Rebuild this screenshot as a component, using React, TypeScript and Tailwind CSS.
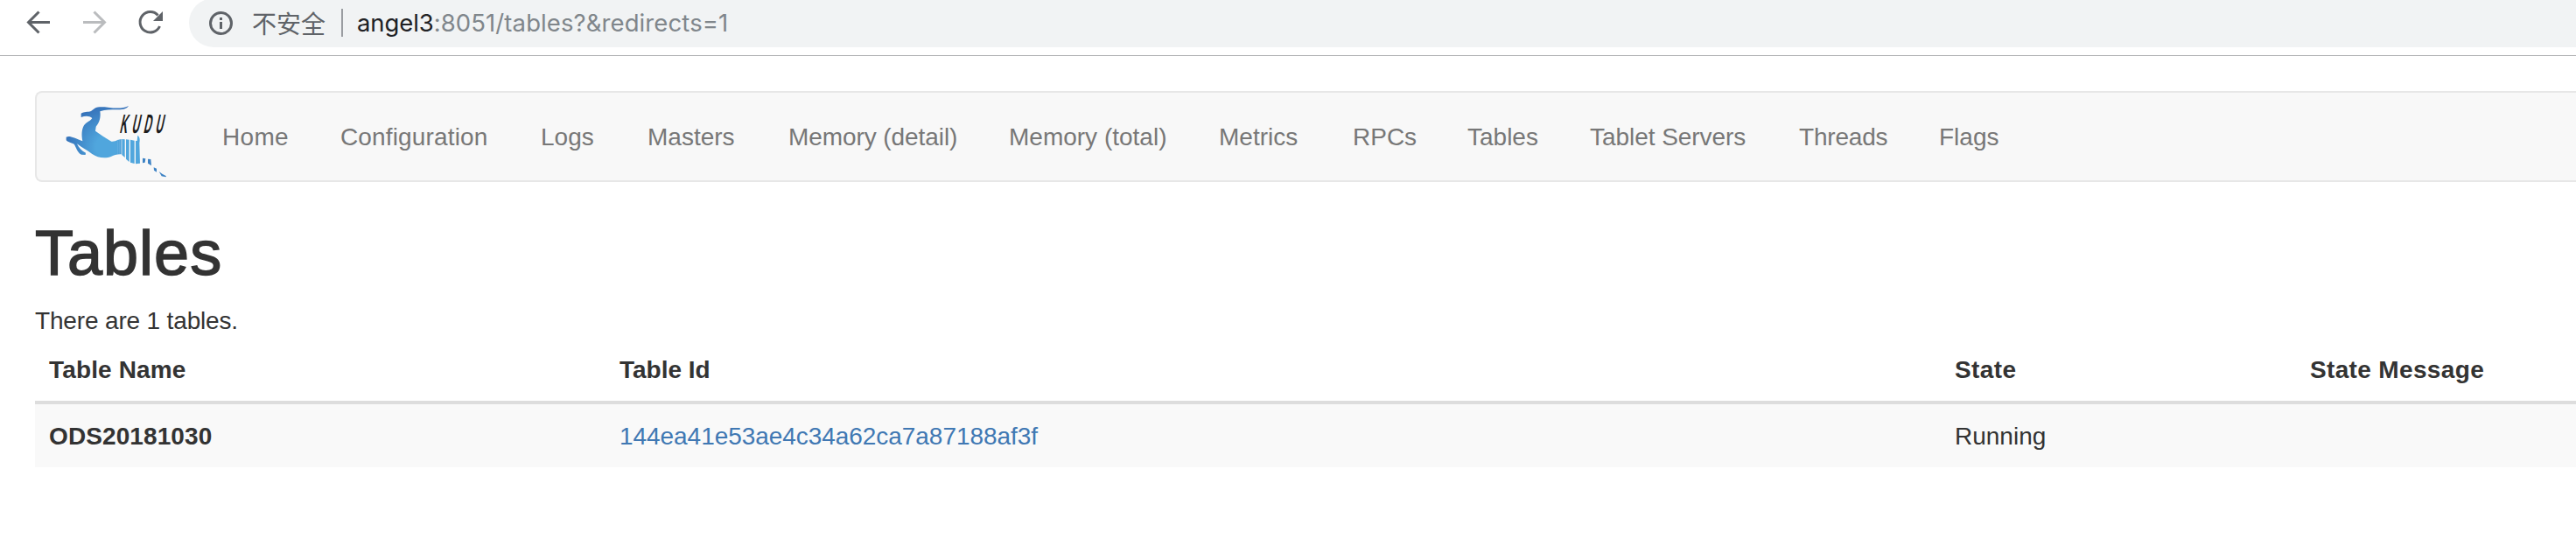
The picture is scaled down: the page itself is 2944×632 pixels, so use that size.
import React from "react";

const NAV: [string, string][] = [
  ["Home", "w-[135px] tracking-[0.3px]"],
  ["Configuration", "w-[229px] tracking-[0.15px]"],
  ["Logs", "w-[122px]"],
  ["Masters", "w-[161px]"],
  ["Memory (detail)", "w-[252px] tracking-[-0.08px]"],
  ["Memory (total)", "w-[240px]"],
  ["Metrics", "w-[153px]"],
  ["RPCs", "w-[131px]"],
  ["Tables", "w-[140px]"],
  ["Tablet Servers", "w-[239px] tracking-[-0.05px]"],
  ["Threads", "w-[160px] tracking-[-0.2px]"],
  ["Flags", "w-[127px]"],
];

function Logo() {
  return (
    <svg width="127" height="90" viewBox="120 60 381 270" aria-label="Kudu">
      <defs>
        <radialGradient id="body" gradientUnits="userSpaceOnUse" cx="275" cy="215" r="145">
          <stop offset="0.25" stopColor="#50a6dd" />
          <stop offset="1" stopColor="#3470b8" />
        </radialGradient>
      </defs>
      <path
        fill="url(#body)"
        d="M188 114 L188 101 C198 94 210 97 222 93 L234 84 C246 77 262 79 280 80 C305 83 330 86 351 75 C342 88 326 88 310 88 C290 88 272 88 253 94 C256 112 252 132 239 146 L237 161 C252 172 270 184 292 197 C300 198 306 195 313 192 L326 189 L326 241 C312 240 302 243 292 248 C272 257 244 253 226 240 C208 227 190 218 174 205 C180 218 190 230 204 236 L203 243 L189 242 C174 234 172 218 164 206 C152 200 142 200 137 192 L137 182 C148 176 164 184 193 196 C189 174 190 156 198 142 C206 130 222 126 226 117 C216 108 202 109 188 114 Z"
      />
      <path d="M314 191V241M320 190V241" stroke="#8cc5e9" strokeWidth="1" />
      <g fill="#50a6dd">
        <path d="M328 189 L338 190 L338 252 L328 243 Z" />
        <path d="M342 190 L353 191 L353 267 L342 257 Z" />
        <path d="M357 191 L371 194 L371 273 L357 269 Z" />
        <path d="M375 195 L380 195 L382 176 C390 182 390 192 388 202 L390 272 L375 274 Z" />
      </g>
      <g fill="#3d82c4">
        <path d="M399 254 L409 256 L407 269 L399 271 Z" />
        <path d="M417 257 L427 258 L429 280 L417 272 Z" />
        <path d="M437 286 L447 290 L447 302 L438 296 Z" />
        <path d="M455 300 L466 308 L480 316 L478 319 L464 316 Z" />
      </g>
      <text
        transform="translate(319 167) skewX(-12) scale(0.39 1)"
        fontFamily="Liberation Sans, sans-serif"
        fontWeight="bold"
        fontSize="92"
        letterSpacing="38"
        fill="#1c1c1c"
      >
        KUDU
      </text>
    </svg>
  );
}

export default function App() {
  return (
    <div className="h-[632px] w-full overflow-hidden bg-white font-['Liberation_Sans',Arial,sans-serif] text-[28px] leading-10 text-[#333]">
      <header className="flex h-16 items-start border-b border-[#b1b3b5] bg-white">
        <svg width="216" height="54" viewBox="0 0 216 54" fill="none" strokeWidth="3">
          <path d="M57 25.5H33M44.5 13.5L32.5 25.5L44.5 37.5" stroke="#5f6368" />
          <path d="M95 25.5H119M107.5 13.5L119.500 25.5L107.500 37.5" stroke="#babcbe" />
          <path d="M182.500 30A11.700 11.700 0 1 1 180.500 17.500" stroke="#5f6368" />
          <path d="M186 13V24H175Z" fill="#5f6368" />
        </svg>
        <div className="-mt-0.5 flex h-14 flex-1 items-center rounded-l-full bg-[#f1f3f4] pl-[23px]">
          <svg width="27" height="27" viewBox="0 0 27 27" fill="none">
            <circle cx="13.500" cy="13.500" r="12" stroke="#5f6368" strokeWidth="3" />
            <path d="M12 7h3v3h-3zM12 12h3v8h-3z" fill="#5f6368" />
          </svg>
          <span className="ml-[22px] font-['Noto_Sans_CJK_SC',sans-serif] text-[28px] text-[#5f6368]">不安全</span>
          <span className="ml-[18px] h-8 w-0.5 bg-[#9a9da1]" />
          <span className="ml-4 font-['Inter',sans-serif] text-[27.500px] tracking-[0.1px] text-[#80868b]">
            <span className="tracking-[-0.1px] text-[#202124]">angel3</span>:8051/tables?&amp;redirects=1
          </span>
        </div>
      </header>
      <nav className="mt-10 ml-10 flex h-26 items-center rounded-l-lg border-2 border-r-0 border-[#e7e7e7] bg-[#f8f8f8] text-[#777]">
        <div className="ml-7 flex w-46 pt-[9px]">
          <Logo />
        </div>
        {NAV.map(([label, classes]) => (
          <a key={label} className={`${classes} shrink-0 pt-0.5 whitespace-nowrap`}>
            {label}
          </a>
        ))}
      </nav>
      <main className="ml-10">
        <h1 className="mt-10 mb-5 h-[78px] pt-0.5 text-[72px] leading-[79px] tracking-[1px] [-webkit-text-stroke:1.5px_#333]">
          Tables
        </h1>
        <p className="h-10 pt-px tracking-[-0.16px]">There are 1 tables.</p>
        <table className="w-full table-fixed border-separate border-spacing-0 text-left">
          <colgroup>
            <col className="w-[652px]" />
            <col className="w-[1526px]" />
            <col className="w-[406px]" />
            <col />
          </colgroup>
          <thead>
            <tr className="[&>th]:h-19 [&>th]:border-b-4 [&>th]:border-[#ddd] [&>th]:px-4 [&>th]:pt-[17px] [&>th]:pb-[15px]">
              <th className="tracking-[0.15px]">Table Name</th>
              <th>Table Id</th>
              <th className="tracking-[0.4px]">State</th>
              <th className="tracking-[0.35px]">State Message</th>
            </tr>
          </thead>
          <tbody>
            <tr className="bg-[#f9f9f9] [&>*]:h-18 [&>*]:px-4 [&>*]:pt-[17px] [&>*]:pb-[15px]">
              <th className="tracking-[0.1px]">ODS20181030</th>
              <td className="tracking-[-0.05px] text-[#4078b3]">144ea41e53ae4c34a62ca7a87188af3f</td>
              <td>Running</td>
              <td />
            </tr>
          </tbody>
        </table>
      </main>
    </div>
  );
}
